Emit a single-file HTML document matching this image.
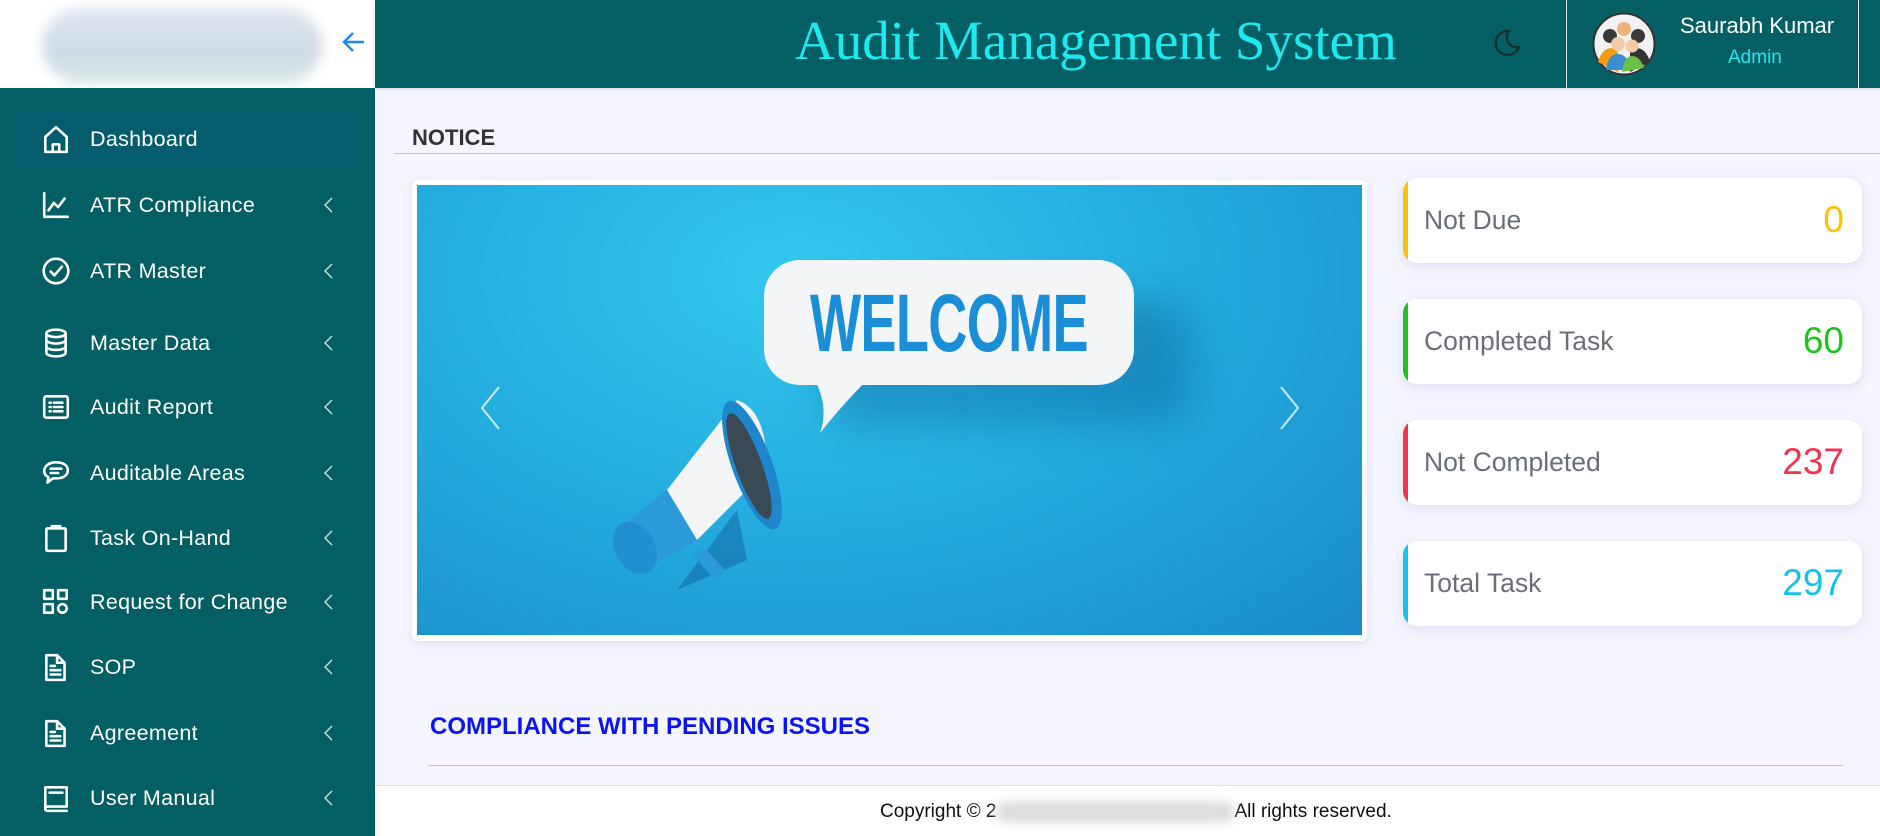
<!DOCTYPE html>
<html><head><meta charset="utf-8">
<style>
*{margin:0;padding:0;box-sizing:border-box}
body{width:1880px;height:836px;overflow:hidden;background:#f5f5fd;font-family:"Liberation Sans",Arial,sans-serif;position:relative}
.logo{position:absolute;left:0;top:0;width:375px;height:88px;background:#fff}
.blur{position:absolute;left:42px;top:8px;width:280px;height:75px;border-radius:40px;background:linear-gradient(180deg,#dfe6ef,#cfdbe4 60%,#d9e8e6);filter:blur(6px)}
.side{position:absolute;left:0;top:88px;width:375px;height:748px;background:#035f63}
.hdr{position:absolute;left:375px;top:0;width:1505px;height:88px;background:#035f63;box-shadow:0 1px 3px rgba(0,0,0,.15)}
.title{position:absolute;left:420px;top:9px;font-family:"Liberation Serif",serif;font-size:55px;color:#1de9f0;white-space:nowrap}
.item{position:absolute;left:0;width:375px;height:56px;color:#fff;font-size:21.5px;letter-spacing:.3px}
.item svg.ic{position:absolute;left:41px;top:13px}
.item span{position:absolute;left:90px;top:16px}
.item .chev{position:absolute;left:322px;top:19px}
.active{position:absolute;left:16px;top:112px;width:344px;height:56px;background:#045c6c;border-radius:3px}
.card{position:absolute;left:1403px;width:459px;height:85px;background:#fff;border-radius:14px;box-shadow:0 3px 10px rgba(120,120,220,.18);overflow:hidden}
.card:before{content:"";position:absolute;left:0;top:0;bottom:0;width:5px;background:var(--c);border-radius:14px 0 0 14px}
.card .l{position:absolute;left:21px;top:27px;font-size:26.5px;color:#6b6f78}
.card .v{position:absolute;right:18px;top:21px;font-size:37px;color:var(--c)}
</style></head><body>
<div class="logo"><div class="blur"></div>
<svg style="position:absolute;left:340px;top:28px" width="28" height="28" viewBox="0 0 28 28"><path d="M24 14H4M13 5l-9 9 9 9" fill="none" stroke="#1a88f0" stroke-width="2.4"/></svg></div>
<div class="hdr">
<div class="title">Audit Management System</div>
<svg style="position:absolute;left:1117px;top:28px" width="30" height="30" viewBox="0 0 30 30"><path d="M17 3A12 12 0 1 0 27 19 10 10 0 0 1 17 3Z" fill="none" stroke="#1b2a2a" stroke-width="2.2"/></svg>
<div style="position:absolute;left:1191px;top:0;width:1px;height:88px;background:#e0e0e0"></div>
<div style="position:absolute;left:1483px;top:0;width:1px;height:88px;background:#e0e0e0"></div>
<svg style="position:absolute;left:1217px;top:12px" width="64" height="64" viewBox="0 0 64 64">
<circle cx="32" cy="32" r="30.5" fill="#f2f2f2" stroke="#333" stroke-width="2"/>
<circle cx="18" cy="24" r="7" fill="#3a3a3a"/><circle cx="46" cy="24" r="7" fill="#3a3a3a"/><circle cx="32" cy="17" r="7" fill="#f0b27a"/>
<path d="M6 50q4-14 14-14l6 4v20z" fill="#f39c12"/><path d="M58 50q-4-14-14-14l-6 4v20z" fill="#333"/>
<circle cx="26" cy="32" r="7" fill="#f5cba7"/><circle cx="40" cy="34" r="6.5" fill="#f5cba7"/>
<path d="M14 58q2-16 12-16t12 16z" fill="#3b8fd0"/><path d="M30 60q2-16 10-16t12 12z" fill="#6cc04a"/>
</svg>
<div style="position:absolute;left:1305px;top:13px;color:#fff;font-size:22px">Saurabh Kumar</div>
<div style="position:absolute;left:1353px;top:47px;color:#1de9f0;font-size:19px">Admin</div>
</div>

<div class="side"></div>
<div class="active"></div>
<div id="nav"></div>

<div style="position:absolute;left:412px;top:125px;font-size:22px;font-weight:bold;color:#333">NOTICE</div>
<div style="position:absolute;left:394px;top:153px;width:1486px;height:1px;background:#c4c4c8"></div>

<div style="position:absolute;left:412px;top:180px;width:955px;height:461px;background:#fff;border-radius:6px;box-shadow:0 2px 8px rgba(120,120,220,.2)">
<div style="position:absolute;left:5px;top:5px;width:945px;height:450px;overflow:hidden;background:radial-gradient(ellipse at 40% 20%,#33c8ee,#22a8dc 55%,#1b8ac8 100%)">
<div style="position:absolute;left:347px;top:75px;width:370px;height:125px;background:#f3f5f6;border-radius:36px;box-shadow:60px 40px 40px rgba(10,80,140,.35)"></div>
<svg style="position:absolute;left:395px;top:190px" width="80" height="70" viewBox="0 0 80 70"><path d="M0 0h60Q30 30 8 58 18 30 0 0Z" fill="#f3f5f6"/></svg>
<div style="position:absolute;left:282px;top:94px;width:500px;text-align:center;font-size:82px;font-weight:bold;color:#1a8fd8;transform:scaleX(.66);transform-origin:center;letter-spacing:-1px;line-height:90px">WELCOME</div>
<svg style="position:absolute;left:180px;top:205px" width="240" height="220" viewBox="0 0 240 220">
<path d="M80 200 L150 170 L140 120 Z" fill="rgba(10,70,130,.35)"/>
<path d="M140 10 Q170 20 170 80 L100 150 L70 100 Z" fill="#f2f4f5"/>
<ellipse cx="155" cy="75" rx="20" ry="68" transform="rotate(-20 155 75)" fill="#1e86cc"/>
<ellipse cx="152" cy="76" rx="13" ry="56" transform="rotate(-20 152 76)" fill="#3a4a55"/>
<path d="M20 140 L70 100 L100 150 L55 175 Z" fill="#2b9ad8"/>
<ellipse cx="38" cy="158" rx="20" ry="28" transform="rotate(-30 38 158)" fill="#2290d0"/>
<path d="M95 165 L118 190 L128 180 L108 158Z" fill="#2b9ad8"/>
</svg>
<svg style="position:absolute;left:62px;top:200px" width="24" height="46" viewBox="0 0 24 46"><path d="M20 2L3 23 20 44" fill="none" stroke="rgba(255,255,255,.75)" stroke-width="2"/></svg>
<svg style="position:absolute;left:860px;top:200px" width="24" height="46" viewBox="0 0 24 46"><path d="M4 2L21 23 4 44" fill="none" stroke="rgba(255,255,255,.75)" stroke-width="2"/></svg>
</div></div>

<div class="card" style="top:178px;--c:#ffc107"><div class="l">Not Due</div><div class="v">0</div></div>
<div class="card" style="top:299px;--c:#1ec31e"><div class="l">Completed Task</div><div class="v">60</div></div>
<div class="card" style="top:420px;--c:#f5334f"><div class="l">Not Completed</div><div class="v">237</div></div>
<div class="card" style="top:541px;--c:#14c3ec"><div class="l">Total Task</div><div class="v">297</div></div>

<div style="position:absolute;left:430px;top:713px;font-size:24px;font-weight:bold;color:#0a14f0">COMPLIANCE WITH PENDING ISSUES</div>
<div style="position:absolute;left:428px;top:765px;width:1415px;height:1px;background:#c4c4c8"></div>

<div style="position:absolute;left:375px;top:785px;width:1505px;height:51px;background:#fff;border-top:1px solid #e2e2e6">
<div style="position:absolute;left:505px;top:15px;font-size:19px;color:#111;white-space:nowrap">Copyright © 2<span style="display:inline-block;width:238px;height:22px;vertical-align:middle;background:#ddd;filter:blur(5px);border-radius:10px"></span>All rights reserved.</div>
</div>

<script>
const W='fill="none" stroke="#fff" stroke-width="2.4" stroke-linecap="round" stroke-linejoin="round"';
const icons={
home:`<path d="M4 12L14 3l10 9v14H4Z" ${W}/><path d="M11 26v-7h6v7" ${W}/>`,
chart:`<path d="M3 3v22h22" ${W}/><path d="M7 19l5-7 4 4 6-8" ${W}/>`,
check:`<circle cx="14" cy="14" r="11.5" ${W}/><path d="M9 14.5l3.5 3.5 7-8" ${W}/>`,
db:`<ellipse cx="14" cy="5" rx="9" ry="3.5" ${W}/><path d="M5 5v18c0 2 4 3.5 9 3.5s9-1.5 9-3.5V5M5 11c0 2 4 3.5 9 3.5s9-1.5 9-3.5M5 17c0 2 4 3.5 9 3.5s9-1.5 9-3.5" ${W}/>`,
list:`<rect x="3" y="4" width="22" height="20" rx="2" ${W}/><path d="M8 10h1M8 14h1M8 18h1M12 10h8M12 14h8M12 18h8" ${W}/>`,
chat:`<path d="M14 4C7 4 3 8 3 12c0 3 2 5 4 6l-1 5 5-4h3c7 0 11-3 11-7.5S21 4 14 4Z" ${W}/><path d="M9 10h10M9 14h7" ${W}/>`,
clip:`<rect x="5" y="5" width="18" height="21" rx="1" ${W}/><path d="M10 5V3h8v2" ${W}/>`,
grid:`<rect x="3" y="3" width="8" height="8" ${W}/><rect x="16" y="3" width="8" height="8" ${W}/><rect x="3" y="16" width="8" height="8" ${W}/><circle cx="20" cy="20" r="4" ${W}/>`,
doc:`<path d="M5 3h10l7 7v16H5Z" ${W}/><path d="M15 3v7h7M9 13h4M9 17h9M9 21h9" ${W}/>`,
book:`<path d="M4 25V4h20v18H6a2 2 0 0 0 0 4h18" ${W}/><path d="M8 9h12" ${W}/>`
};
const items=[["home","Dashboard",139,0],["chart","ATR Compliance",205,1],["check","ATR Master",271,1],["db","Master Data",343,1],["list","Audit Report",407,1],["chat","Auditable Areas",473,1],["clip","Task On-Hand",538,1],["grid","Request for Change",602,1],["doc","SOP",667,1],["doc","Agreement",733,1],["book","User Manual",798,1]];
let h='';
for(const [ic,t,y,c] of items){
h+=`<div class="item" style="top:${y-28}px"><svg class="ic" width="30" height="30" viewBox="0 0 28 28">${icons[ic]}</svg><span>${t}</span>${c?'<svg class="chev" width="12" height="18" viewBox="0 0 12 18"><path d="M10 2L3 9l7 7" fill="none" stroke="#cfe0e0" stroke-width="1.4"/></svg>':''}</div>`;
}
document.getElementById('nav').innerHTML=h;
</script>
</body></html>
